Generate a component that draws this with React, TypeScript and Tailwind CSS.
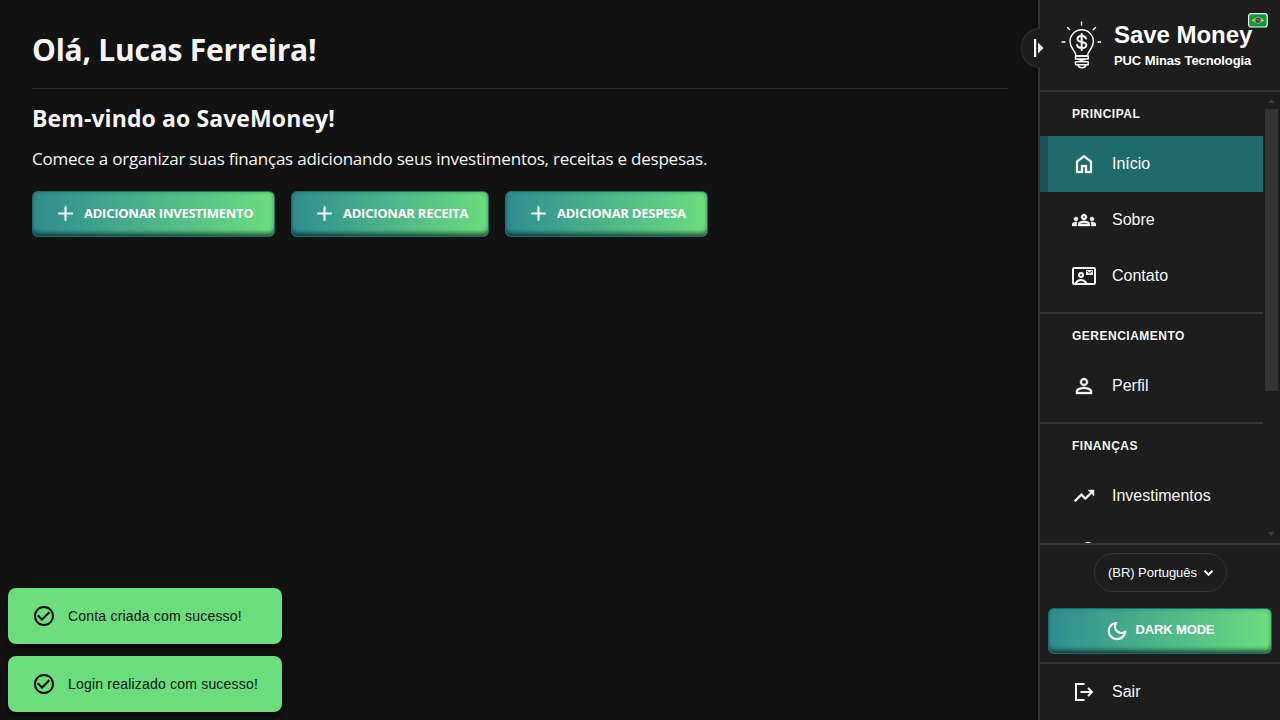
import type { ReactNode } from "react";
import {
  MdAdd,
  MdCheckCircleOutline,
  MdOutlineGroups,
  MdPersonOutline,
  MdTrendingUp,
} from "react-icons/md";

const menuIcon = "size-6 stroke-current stroke-[0.4] [&_[fill=none]]:stroke-none";

function HomeIcon() {
  return (
    <svg className="size-6" viewBox="0 0 24 24" fill="currentColor" stroke="currentColor" strokeWidth=".3">
      <path d="M6 19h3v-6h6v6h3v-9l-6-4.5L6 10v9Zm-2 2V9l8-6 8 6v12h-7v-6h-2v6H4Z" />
    </svg>
  );
}

function ContactIcon() {
  return (
    <svg className="size-6" viewBox="0 0 24 24" fill="none" stroke="currentColor" strokeWidth="2">
      <rect x="1" y="4" width="22" height="16" rx="1" />
      <circle cx="9" cy="11" r="2" />
      <path d="M3.500 19.500c1.300-2.300 3.200-3.500 5.500-3.500s4.200 1.200 5.500 3.500" />
      <path d="M14 6h7v5h-7z" fill="currentColor" stroke="none" />
      <path d="M14.500 7l3 2 3-2" stroke="#1d1d1d" strokeWidth="1" />
    </svg>
  );
}

function LogoutIcon() {
  return (
    <svg className="size-6" viewBox="0 0 24 24" fill="none" stroke="currentColor" strokeWidth="2">
      <path d="M12.500 4H4v16h8.500M8.500 12h11.500M16 8l4 4-4 4" />
    </svg>
  );
}

function MoonIcon() {
  return (
    <svg className="mr-2 mt-0.5 size-[22px]" viewBox="0 0 24 24" fill="none" stroke="currentColor" strokeWidth="2.400" strokeLinejoin="round">
      <path d="M21 12.790A9 9 0 1 1 11.210 3 7 7 0 0 0 21 12.790Z" />
    </svg>
  );
}

function Logo() {
  return (
    <svg className="h-12 w-10 shrink-0" viewBox="0 0 40 48" fill="none" stroke="#fff" strokeWidth="1.4" strokeLinecap="round" strokeLinejoin="round">
      <path d="M20.500 1v3M6.500 6.500l2.300 2.300M34.500 6.500l-2.300 2.300M1 21h3M37 21h3" />
      <path d="M15 35c0-5.500-6-7-6-14.500a11.700 11.700 0 0 1 23.400 0C32.400 28 26.500 29.500 26.500 35Z" />
      <path d="M14.500 35h12.700v3H14.500zM14.500 40.700h12.700v3H14.500zM15.500 38l10 2.700M25.500 38l-10 2.700M17 44c1 3.600 7 3.600 8 0" />
      <path strokeWidth="2" d="M25 17.500c-.5-1.800-2.300-2.500-4.300-2.500-2.300 0-4.200 1-4.200 2.900 0 4.300 8.800 2 8.800 6 0 2-2 3-4.500 3-2.300 0-4.300-.9-4.700-2.900M20.700 13v16" />
    </svg>
  );
}

function Flag() {
  return (
    <svg className="absolute left-[208px] top-[13px] h-[15px] w-5" viewBox="0 0 20 15">
      <rect x=".6" y=".6" width="18.600" height="13.400" rx="2.500" fill="#0a9a3c" stroke="#f5f5f5" strokeWidth="1.200" />
      <path d="M3.300 7.300L10 3.500l6.500 3.800L10 11Z" fill="#d9cb20" />
      <circle cx="10" cy="7.300" r="2.700" fill="#22418c" />
      <path d="M7.800 6.500q2.500-.3 4.400 1.500" stroke="#8fa3c4" strokeWidth=".6" fill="none" />
    </svg>
  );
}

const gradient =
  "flex items-center rounded-[6px] border border-[#1f6b6b] bg-linear-to-r from-[#2f8e8e] to-[#6bdd7d] font-bold text-white shadow-[inset_0_-5px_4px_-2px_rgba(0,0,0,0.55),inset_0_0_4px_rgba(20,80,80,0.35)]";

function AddButton({ label, size }: { label: string; size: string }) {
  return (
    <button className={`${gradient} ${size} h-[46px] pl-5 text-[13px] tracking-[-0.25px]`}>
      <MdAdd className="-mt-px size-[25px] shrink-0" />
      <span className="-mt-px ml-1.5 whitespace-nowrap">{label}</span>
    </button>
  );
}

function Item({ icon, label, active }: { icon: ReactNode; label?: string; active?: boolean }) {
  return (
    <a className={`flex h-14 shrink-0 items-center gap-4 text-base ${active ? "border-l-8 border-[#1a5555] bg-[#1f6b6b] pl-6 text-white" : "pl-8"}`}>
      {icon}
      <span>{label}</span>
    </a>
  );
}

function Section({ title, children }: { title: string; children: ReactNode }) {
  return (
    <section className="shrink-0 border-b-2 border-[#333] pb-2">
      <h3 className="flex h-11 items-center pl-8 text-xs font-bold tracking-[0.5px]">{title}</h3>
      {children}
    </section>
  );
}

function Toast({ text }: { text: string }) {
  return (
    <div className="flex h-14 w-[274px] items-center rounded-lg bg-[#6bdd7d] pl-6 text-sm tracking-[0.2px] text-[#121212] shadow-[0_3px_6px_rgba(0,0,0,0.7)]">
      <MdCheckCircleOutline className="size-6 text-black" />
      <span className="ml-3">{text}</span>
    </div>
  );
}

export default function App() {
  return (
    <div className="relative flex h-[720px] w-[1280px] overflow-hidden bg-[#121212] font-['Liberation_Sans',sans-serif] text-[#f5f5f5]">
      <main className="flex-1 pl-8 pr-[30px] font-['Open_Sans',sans-serif]">
        <header className="h-[89px] border-b border-[#2b2b2b] pt-[30px]">
          <h1 className="text-[30px] font-bold leading-10 tracking-[-0.24px]">Olá, Lucas Ferreira!</h1>
        </header>
        <h2 className="mt-[13px] text-[23px] font-bold leading-8 tracking-[0.1px]">Bem-vindo ao SaveMoney!</h2>
        <p className="mt-[11px] text-[17px] leading-7 tracking-[-0.22px]">
          Comece a organizar suas finanças adicionando seus investimentos, receitas e despesas.
        </p>
        <div className="mt-[18px] flex gap-4">
          <AddButton label="ADICIONAR INVESTIMENTO" size="w-[243px]" />
          <AddButton label="ADICIONAR RECEITA" size="w-[198px]" />
          <AddButton label="ADICIONAR DESPESA" size="w-[203px]" />
        </div>
      </main>

      <aside className="relative flex w-[242px] flex-col border-l-2 border-[#333] bg-[#1d1d1d] shadow-[0_0_12px_rgba(0,0,0,0.5)]">
        <button className="absolute -left-[19px] top-7 h-10 w-[19px] rounded-l-full border border-r-0 border-[#333] bg-[#1d1d1d]" aria-label="Menu">
          <svg className="absolute left-[12px] top-[10px] h-[18px] w-[10px]" viewBox="0 0 10 18" fill="#fff">
            <path d="M0 0h2.200v18H0zM4 3.500L9.500 9 4 14.500z" />
          </svg>
        </button>
        <header className="flex h-[92px] shrink-0 items-center border-b-2 border-[#333] pl-[21px]">
          <Logo />
          <div className="ml-[13px] whitespace-nowrap pt-0.5 font-bold text-white">
            <div className="mb-0.5 text-2xl leading-7 tracking-[-0.05px]">Save Money</div>
            <div className="text-[13px] leading-5 tracking-[-0.1px]">PUC Minas Tecnologia</div>
          </div>
          <Flag />
        </header>
        <div className="flex h-[451px] shrink-0 overflow-hidden">
          <nav className="flex w-[223px] flex-col">
            <Section title="PRINCIPAL">
              <Item active icon={<HomeIcon />} label="Início" />
              <Item icon={<MdOutlineGroups className={menuIcon} />} label="Sobre" />
              <Item icon={<ContactIcon />} label="Contato" />
            </Section>
            <Section title="GERENCIAMENTO">
              <Item icon={<MdPersonOutline className={menuIcon} />} label="Perfil" />
            </Section>
            <Section title="FINANÇAS">
              <Item icon={<MdTrendingUp className={menuIcon} />} label="Investimentos" />
              <Item
                icon={
                  <svg className="size-6" viewBox="0 0 24 24" fill="none" stroke="currentColor" strokeWidth="2">
                    <circle cx="16" cy="6" r="3.300" />
                  </svg>
                }
              />
            </Section>
          </nav>
          <div className="ml-0.5 flex w-[13px] flex-col items-center justify-between pb-[7px] pt-[7px]">
            <svg className="h-1 w-[7px] shrink-0" viewBox="0 0 7 4" fill="#3a3a3a"><path d="M0 4l3.500-4L7 4z" /></svg>
            <div className="mb-auto mt-1.5 h-[282px] w-full bg-[#333]" />
            <svg className="h-1 w-[7px] shrink-0" viewBox="0 0 7 4" fill="#3a3a3a"><path d="M0 0l3.500 4L7 0z" /></svg>
          </div>
        </div>
        <footer className="flex flex-1 flex-col border-t-2 border-[#333]">
          <button className="ml-[54px] mt-2 flex h-[39px] w-[133px] items-center whitespace-nowrap rounded-full border border-[#333] pl-[13px] text-[13px] tracking-[-0.05px] text-white">
            <span>(BR) Português</span>
            <svg className="ml-[7px] h-1.5 w-[9px] shrink-0" viewBox="0 0 9 6" fill="none" stroke="#fff" strokeWidth="2"><path d="M.5.8l4 4 4-4" /></svg>
          </button>
          <button className={`${gradient} mx-2 mt-4 h-[46px] justify-center pb-[3px] text-[13px] tracking-[-0.15px]`}>
            <MoonIcon />
            DARK MODE
          </button>
          <div className="mt-2 border-t-2 border-[#333]">
            <Item icon={<LogoutIcon />} label="Sair" />
          </div>
        </footer>
      </aside>

      <div className="absolute bottom-2 left-2 flex flex-col gap-3">
        <Toast text="Conta criada com sucesso!" />
        <Toast text="Login realizado com sucesso!" />
      </div>
    </div>
  );
}
